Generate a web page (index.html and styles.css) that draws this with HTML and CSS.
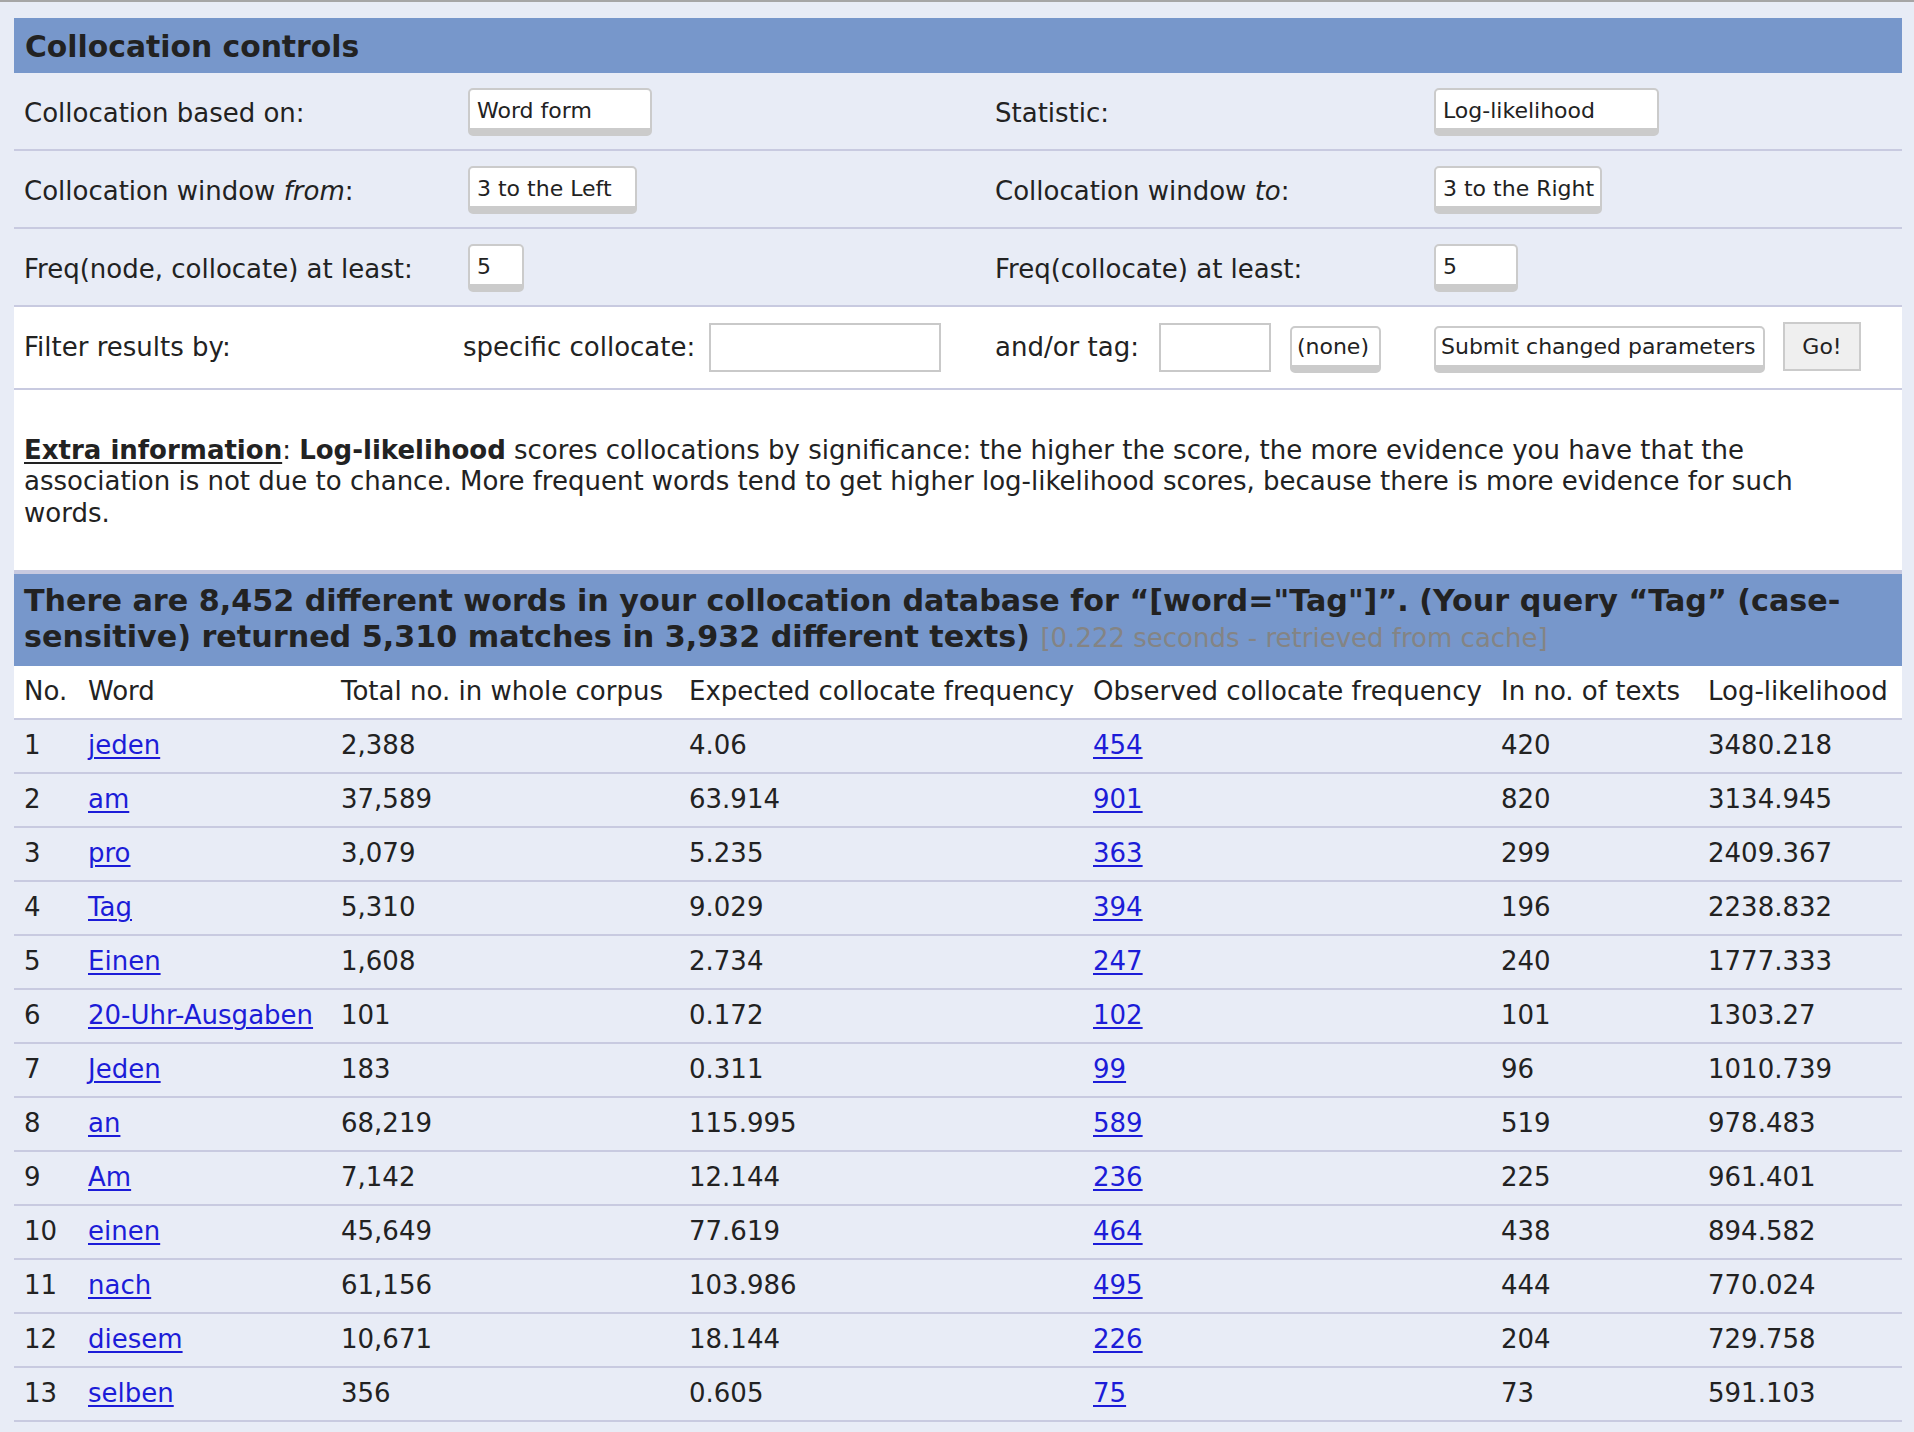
FILE: index.html
```html
<!DOCTYPE html>
<html lang="en">
<head>
<meta charset="utf-8">
<title>Collocation controls</title>
<link rel="stylesheet" href="styles.css">
</head>
<body>
<div class="topline"></div>
<div class="page">
  <table class="controls">
    <colgroup>
      <col class="c1"><col class="c2"><col class="c3"><col class="c4">
    </colgroup>
    <tr><th colspan="4" class="bar">Collocation controls</th></tr>
    <tr class="crow">
      <td class="lbl">Collocation based on:</td>
      <td class="ctl"><select class="sel w-wordform"><option>Word form</option></select></td>
      <td class="lbl">Statistic:</td>
      <td class="ctl"><select class="sel w-stat"><option>Log-likelihood</option></select></td>
    </tr>
    <tr class="crow">
      <td class="lbl">Collocation window <i>from</i>:</td>
      <td class="ctl"><select class="sel w-left"><option>3 to the Left</option></select></td>
      <td class="lbl">Collocation window <i>to</i>:</td>
      <td class="ctl"><select class="sel w-right"><option>3 to the Right</option></select></td>
    </tr>
    <tr class="crow">
      <td class="lbl">Freq(node, collocate) at least:</td>
      <td class="ctl"><select class="sel w-five"><option>5</option></select></td>
      <td class="lbl">Freq(collocate) at least:</td>
      <td class="ctl"><select class="sel w-five2"><option>5</option></select></td>
    </tr>
    <tr class="frow">
      <td class="fcell"><div class="fl"><span class="ftext">Filter results by:</span></div></td>
      <td class="fcell fcell-coll"><div class="fl"><span class="ftext">specific collocate:</span><input class="txt w-coll" type="text"></div></td>
      <td class="fcell"><div class="fl"><span class="ftext">and/or tag:</span><input class="txt w-tag" type="text"><button class="sel btn w-none">(none)</button></div></td>
      <td class="fcell"><div class="fl"><button class="sel btn w-submit">Submit changed parameters</button><button class="go">Go!</button></div></td>
    </tr>
    <tr>
      <td colspan="4" class="extra"><b><u>Extra information</u></b>: <b>Log-likelihood</b> scores collocations by significance: the higher the score, the more evidence you have that the association is not due to chance. More frequent words tend to get higher log-likelihood scores, because there is more evidence for such words.</td>
    </tr>
  </table>

  <table class="results">
    <colgroup>
      <col class="r1"><col class="r2"><col class="r3"><col class="r4"><col class="r5"><col class="r6"><col class="r7">
    </colgroup>
    <tr><th colspan="7" class="bar bar2">There are 8,452 different words in your collocation database for “[word="Tag"]”. (Your query “Tag” (case-sensitive) returned 5,310 matches in 3,932 different texts) <span class="timing">[0.222 seconds - retrieved from cache]</span></th></tr>
    <tr class="head">
      <td>No.</td><td>Word</td><td>Total no. in whole corpus</td><td>Expected collocate frequency</td><td>Observed collocate frequency</td><td>In no. of texts</td><td>Log-likelihood</td>
    </tr>
    <tr><td>1</td><td><a href="#">jeden</a></td><td>2,388</td><td>4.06</td><td><a href="#">454</a></td><td>420</td><td>3480.218</td></tr>
    <tr><td>2</td><td><a href="#">am</a></td><td>37,589</td><td>63.914</td><td><a href="#">901</a></td><td>820</td><td>3134.945</td></tr>
    <tr><td>3</td><td><a href="#">pro</a></td><td>3,079</td><td>5.235</td><td><a href="#">363</a></td><td>299</td><td>2409.367</td></tr>
    <tr><td>4</td><td><a href="#">Tag</a></td><td>5,310</td><td>9.029</td><td><a href="#">394</a></td><td>196</td><td>2238.832</td></tr>
    <tr><td>5</td><td><a href="#">Einen</a></td><td>1,608</td><td>2.734</td><td><a href="#">247</a></td><td>240</td><td>1777.333</td></tr>
    <tr><td>6</td><td><a href="#">20-Uhr-Ausgaben</a></td><td>101</td><td>0.172</td><td><a href="#">102</a></td><td>101</td><td>1303.27</td></tr>
    <tr><td>7</td><td><a href="#">Jeden</a></td><td>183</td><td>0.311</td><td><a href="#">99</a></td><td>96</td><td>1010.739</td></tr>
    <tr><td>8</td><td><a href="#">an</a></td><td>68,219</td><td>115.995</td><td><a href="#">589</a></td><td>519</td><td>978.483</td></tr>
    <tr><td>9</td><td><a href="#">Am</a></td><td>7,142</td><td>12.144</td><td><a href="#">236</a></td><td>225</td><td>961.401</td></tr>
    <tr><td>10</td><td><a href="#">einen</a></td><td>45,649</td><td>77.619</td><td><a href="#">464</a></td><td>438</td><td>894.582</td></tr>
    <tr><td>11</td><td><a href="#">nach</a></td><td>61,156</td><td>103.986</td><td><a href="#">495</a></td><td>444</td><td>770.024</td></tr>
    <tr><td>12</td><td><a href="#">diesem</a></td><td>10,671</td><td>18.144</td><td><a href="#">226</a></td><td>204</td><td>729.758</td></tr>
    <tr><td>13</td><td><a href="#">selben</a></td><td>356</td><td>0.605</td><td><a href="#">75</a></td><td>73</td><td>591.103</td></tr>
  </table>
</div>
</body>
</html>
```

FILE: styles.css
```css
html, body {
  margin: 0;
  padding: 0;
  background: #e8ecf6;
}
body {
  font-family: "DejaVu Sans", Verdana, sans-serif;
  font-size: 26px;
  line-height: 32px;
  color: #222222;
}
.topline {
  height: 2px;
  background: #a6a6a6;
}
.page {
  padding: 16px 12px 0 14px;
}
table {
  border-collapse: separate;
  border-spacing: 0;
  table-layout: fixed;
  width: 1888px;
}
.c1 { width: 444px; }
.c2 { width: 527px; }
.c3 { width: 439px; }
.c4 { width: 478px; }

th.bar {
  background: #7797cb;
  color: #222222;
  font-weight: bold;
  font-size: 29.8px;
  line-height: 36.6px;
  text-align: left;
  padding: 11px 10px 7px 11px;
}
.controls td {
  vertical-align: top;
  padding: 0 10px;
  border-bottom: 2px solid #c8cae0;
}
.crow td {
  height: 76px;
  box-sizing: content-box;
}
.crow td.lbl {
  padding-top: 24px;
  height: 52px;
}
.crow td.ctl {
  padding-top: 15px;
  height: 61px;
}
.sel {
  appearance: none;
  -webkit-appearance: none;
  display: block;
  box-sizing: border-box;
  height: 48px;
  margin: 0;
  padding: 4px 0 0 7px;
  background: #ffffff;
  border: 2px solid #cbcbcb;
  border-bottom-width: 8px;
  border-radius: 5px;
  font-family: "DejaVu Sans", Verdana, sans-serif;
  font-size: 22px;
  color: #222222;
  text-align: left;
}
.w-wordform { width: 184px; }
.w-stat { width: 225px; }
.w-left { width: 169px; }
.w-right { width: 168px; }
.w-five { width: 56px; }
.w-five2 { width: 84px; }

.frow td {
  background: #ffffff;
  padding: 0 10px;
}
.frow td.fcell-coll {
  padding-left: 5px;
}
.fl {
  display: flex;
  align-items: flex-start;
  height: 81px;
}
.ftext {
  margin-top: 24px;
  white-space: nowrap;
}
.txt {
  box-sizing: border-box;
  height: 49px;
  margin: 16px 0 0 0;
  padding: 0 6px;
  border: 2px solid #c9c9c9;
  background: #ffffff;
  font-family: "DejaVu Sans", Verdana, sans-serif;
  font-size: 22px;
}
.w-coll { width: 232px; margin-left: 14px; }
.w-tag { width: 112px; margin-left: 20px; }
.btn {
  height: 47px;
  margin-top: 19px;
  padding: 0 0 0 5px;
  cursor: default;
}
.w-none { width: 91px; margin-left: 19px; }
.w-submit { width: 331px; }
.go {
  box-sizing: border-box;
  width: 78px;
  height: 49px;
  margin: 15px 0 0 18px;
  padding: 0;
  background: #efefef;
  border: 2px solid #cbcbcb;
  border-radius: 0;
  font-family: "DejaVu Sans", Verdana, sans-serif;
  font-size: 22px;
  color: #222222;
  text-align: center;
}
td.extra {
  background: #ffffff;
  padding: 45px 40px 40px 10px;
  line-height: 31.7px;
}
td.extra u {
  text-decoration-thickness: 2px;
  text-underline-offset: 3px;
}

.results .r1 { width: 64px; }
.results .r2 { width: 253px; }
.results .r3 { width: 348px; }
.results .r4 { width: 404px; }
.results .r5 { width: 408px; }
.results .r6 { width: 207px; }
.results .r7 { width: 204px; }

th.bar2 {
  font-size: 30.2px;
  border-top: 2px solid #c8cae0;
  padding: 9px 10px 9px 10px;
}
.timing {
  font-weight: normal;
  font-size: 26px;
  color: #848484;
}
.results td {
  padding: 9px 4px 11px 10px;
  border-bottom: 2px solid #c8cae0;
  white-space: nowrap;
  vertical-align: top;
}
.results tr.head td {
  background: #ffffff;
}
a {
  color: #1c1cd8;
  text-decoration: underline;
  text-decoration-thickness: 2px;
  text-underline-offset: 3px;
}
```
